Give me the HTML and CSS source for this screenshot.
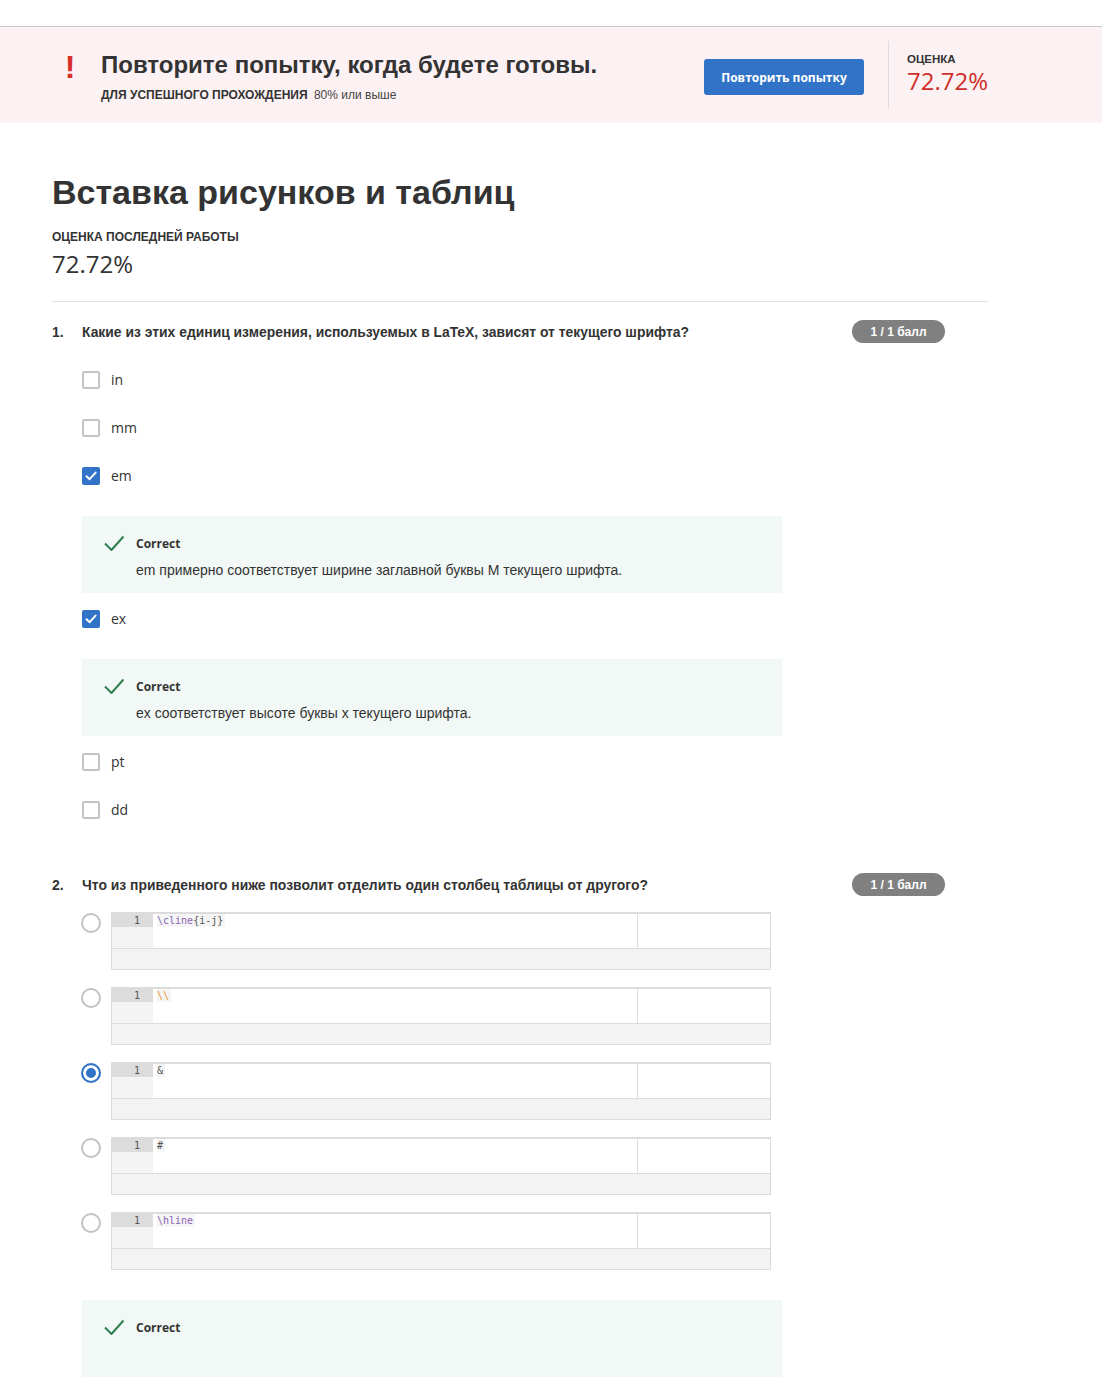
FILE: index.html
```html
<!DOCTYPE html>
<html lang="ru">
<head>
<meta charset="utf-8">
<title>Вставка рисунков и таблиц</title>
<link rel="stylesheet" href="styles.css">
</head>
<body>
<div class="topbar"></div>
<section class="banner">
  <div class="banner-inner">
    <div class="banner-msg">
      <div class="banner-icon">!</div>
      <div class="banner-text">
        <h2 class="banner-title">Повторите попытку, когда будете готовы.</h2>
        <div class="banner-sub"><strong>ДЛЯ УСПЕШНОГО ПРОХОЖДЕНИЯ</strong> 80% или выше</div>
      </div>
    </div>
    <button class="btn-retry" type="button">Повторить попытку</button>
    <div class="banner-divider"></div>
    <div class="banner-score">
      <div class="banner-score-label">ОЦЕНКА</div>
      <div class="banner-score-value">72.72%</div>
    </div>
  </div>
</section>

<main class="main">
  <h1 class="page-title">Вставка рисунков и таблиц</h1>
  <div class="grade-label">ОЦЕНКА ПОСЛЕДНЕЙ РАБОТЫ</div>
  <div class="grade-value">72.72%</div>
  <div class="divider"></div>

  <section class="question q1">
    <div class="q-head">
      <div class="q-num">1.</div>
      <div class="q-text">Какие из этих единиц измерения, используемых в LaTeX, зависят от текущего шрифта?</div>
      <div class="badge">1 / 1 балл</div>
    </div>
    <div class="options">
      <div class="option"><span class="checkbox"></span><span class="opt-label">in</span></div>
      <div class="option"><span class="checkbox"></span><span class="opt-label">mm</span></div>
      <div class="option"><span class="checkbox checked"><svg viewBox="0 0 14 14" width="14" height="14"><polyline points="2.5,7.2 5.6,10.2 11.6,3.6" fill="none" stroke="#fff" stroke-width="2" stroke-linecap="round" stroke-linejoin="round"/></svg></span><span class="opt-label">em</span></div>
      <div class="feedback">
        <svg class="fb-icon" viewBox="0 0 20 16" width="20" height="16"><polyline points="1,8.5 7.5,15 19.5,1.5" fill="none" stroke="#2e7d50" stroke-width="2"/></svg>
        <div class="fb-body">
          <div class="fb-title">Correct</div>
          <div class="fb-text">em примерно соответствует ширине заглавной буквы М текущего шрифта.</div>
        </div>
      </div>
      <div class="option"><span class="checkbox checked"><svg viewBox="0 0 14 14" width="14" height="14"><polyline points="2.5,7.2 5.6,10.2 11.6,3.6" fill="none" stroke="#fff" stroke-width="2" stroke-linecap="round" stroke-linejoin="round"/></svg></span><span class="opt-label">ex</span></div>
      <div class="feedback">
        <svg class="fb-icon" viewBox="0 0 20 16" width="20" height="16"><polyline points="1,8.5 7.5,15 19.5,1.5" fill="none" stroke="#2e7d50" stroke-width="2"/></svg>
        <div class="fb-body">
          <div class="fb-title">Correct</div>
          <div class="fb-text">ex соответствует высоте буквы x текущего шрифта.</div>
        </div>
      </div>
      <div class="option"><span class="checkbox"></span><span class="opt-label">pt</span></div>
      <div class="option"><span class="checkbox"></span><span class="opt-label">dd</span></div>
    </div>
  </section>

  <section class="question q2">
    <div class="q-head">
      <div class="q-num">2.</div>
      <div class="q-text">Что из приведенного ниже позволит отделить один столбец таблицы от другого?</div>
      <div class="badge">1 / 1 балл</div>
    </div>
    <div class="options code-options">
      <div class="code-option">
        <span class="radio"></span>
        <div class="code">
          <div class="code-main">
            <div class="gutter"><div class="ln">1</div></div>
            <div class="code-area"><span class="code-line"><span class="tk-cmd">\cline</span><span class="tk-plain">{i-j}</span></span></div>
            <div class="code-side"></div>
          </div>
          <div class="code-foot"></div>
        </div>
      </div>
      <div class="code-option">
        <span class="radio"></span>
        <div class="code">
          <div class="code-main">
            <div class="gutter"><div class="ln">1</div></div>
            <div class="code-area"><span class="code-line"><span class="tk-esc">\\</span></span></div>
            <div class="code-side"></div>
          </div>
          <div class="code-foot"></div>
        </div>
      </div>
      <div class="code-option">
        <span class="radio selected"></span>
        <div class="code">
          <div class="code-main">
            <div class="gutter"><div class="ln">1</div></div>
            <div class="code-area"><span class="code-line"><span class="tk-plain">&amp;</span></span></div>
            <div class="code-side"></div>
          </div>
          <div class="code-foot"></div>
        </div>
      </div>
      <div class="code-option">
        <span class="radio"></span>
        <div class="code">
          <div class="code-main">
            <div class="gutter"><div class="ln">1</div></div>
            <div class="code-area"><span class="code-line"><span class="tk-plain">#</span></span></div>
            <div class="code-side"></div>
          </div>
          <div class="code-foot"></div>
        </div>
      </div>
      <div class="code-option">
        <span class="radio"></span>
        <div class="code">
          <div class="code-main">
            <div class="gutter"><div class="ln">1</div></div>
            <div class="code-area"><span class="code-line"><span class="tk-cmd">\hline</span></span></div>
            <div class="code-side"></div>
          </div>
          <div class="code-foot"></div>
        </div>
      </div>
      <div class="feedback feedback-last">
        <svg class="fb-icon" viewBox="0 0 20 16" width="20" height="16"><polyline points="1,8.5 7.5,15 19.5,1.5" fill="none" stroke="#2e7d50" stroke-width="2"/></svg>
        <div class="fb-body">
          <div class="fb-title">Correct</div>
          <div class="fb-text"></div>
        </div>
      </div>
    </div>
  </section>
</main>
</body>
</html>
```

FILE: styles.css
```css
* { box-sizing: border-box; }

body {
  margin: 0;
  background: #fff;
  color: #333;
  font-family: "Liberation Sans", Arial, sans-serif;
}

.topbar {
  height: 27px;
  border-bottom: 1px solid #c8c8c8;
}

/* Banner */
.banner {
  background: #fdf2f3;
  height: 96px;
}
.banner-inner {
  display: flex;
  align-items: flex-start;
  height: 100%;
  padding-left: 62px;
}
.banner-msg {
  display: flex;
  align-items: flex-start;
  margin-top: 24px;
}
.banner-icon {
  width: 16px;
  margin-right: 23px;
  margin-top: 2px;
  font-size: 32px;
  line-height: 28px;
  font-weight: 700;
  color: #d9302c;
  text-align: center;
}
.banner-title {
  margin: 0;
  font-size: 24px;
  line-height: 28px;
  font-weight: 700;
  color: #333;
}
.banner-sub {
  margin-top: 8px;
  font-size: 12px;
  line-height: 16px;
  color: #444;
}
.banner-sub strong {
  color: #333;
  margin-right: 3px;
}
.btn-retry {
  margin-left: auto;
  margin-top: 32px;
  width: 160px;
  height: 36px;
  border: 0;
  border-radius: 3px;
  background: #3174c7;
  color: #fff;
  font-family: "Open Sans", sans-serif;
  font-weight: 700;
  font-size: 12px;
  padding: 0;
}
.banner-divider {
  width: 1px;
  height: 67px;
  background: #dcdcdc;
  margin: 14px 18px 0 24px;
}
.banner-score {
  width: 100px;
  margin-top: 25px;
  margin-right: 95px;
}
.banner-score-label {
  font-size: 11.5px;
  line-height: 14px;
  font-weight: 700;
  color: #333;
}
.banner-score-value {
  margin-top: 1px;
  font-family: "Open Sans", sans-serif;
  font-size: 24px;
  line-height: 28px;
  color: #cf2e2a;
}

/* Main */
.main {
  width: 988px;
  padding: 49px 0 0 52px;
}
.page-title {
  margin: 0;
  font-size: 34px;
  line-height: 40px;
  font-weight: 700;
  color: #333;
}
.grade-label {
  margin-top: 17px;
  font-size: 12px;
  line-height: 16px;
  font-weight: 700;
}
.grade-value {
  margin-top: 4px;
  font-family: "Open Sans", sans-serif;
  font-size: 24px;
  line-height: 30px;
  color: #333;
}
.divider {
  margin-top: 22px;
  border-top: 1px solid #e1e1e1;
}

/* Questions */
.question { margin-top: 18px; }
.question.q2 { margin-top: 27px; }

.q-head {
  display: flex;
  align-items: center;
  height: 23px;
}
.q-num {
  width: 30px;
  font-size: 14px;
  font-weight: 700;
}
.q-text {
  flex: 1;
  font-size: 13.9px;
  font-weight: 700;
  color: #333;
}
.badge {
  flex: none;
  width: 93px;
  height: 23px;
  margin-right: 43px;
  border-radius: 12px;
  background: #808080;
  color: #fff;
  font-size: 12px;
  font-weight: 700;
  display: flex;
  align-items: center;
  justify-content: center;
}

.options {
  display: flex;
  flex-direction: column;
  align-items: flex-start;
  padding-left: 30px;
  margin-top: 25px;
}
.option {
  display: flex;
  align-items: center;
  height: 24px;
  margin-bottom: 24px;
}
.checkbox {
  width: 18px;
  height: 18px;
  border: 2px solid #c4c4c4;
  border-radius: 2px;
  margin-right: 11px;
  display: flex;
  align-items: center;
  justify-content: center;
}
.checkbox.checked {
  background: #3174c7;
  border-color: #3174c7;
}
.checkbox svg { display: block; }
.opt-label {
  font-family: "Open Sans", sans-serif;
  font-size: 14px;
  line-height: 22px;
  color: #333;
}

/* Feedback */
.feedback {
  width: 700px;
  display: flex;
  align-items: flex-start;
  background: #f2f8f6;
  margin: 4px 0 14px;
  padding: 20px 20px 14px 22px;
}
.fb-icon {
  display: block;
  flex: none;
  margin-right: 12px;
  margin-top: -1px;
}
.fb-title {
  font-family: "Open Sans", sans-serif;
  font-size: 12px;
  line-height: 16px;
  font-weight: 700;
  color: #333;
}
.fb-text {
  margin-top: 9px;
  min-height: 18px;
  font-size: 14px;
  line-height: 18px;
  color: #333;
}
.feedback-last { margin: 13px 0 0; }

/* Code options */
.code-options { margin-top: 16px; }
.code-option {
  display: flex;
  align-items: flex-start;
  margin-bottom: 17px;
}
.radio {
  flex: none;
  width: 20px;
  height: 20px;
  margin: 1px 10px 0 -1px;
  border: 2px solid #c2c2c2;
  border-radius: 50%;
  background: #fff;
}
.radio.selected {
  border-color: #3174c7;
  background: #3174c7;
  box-shadow: inset 0 0 0 3px #fff;
}
.code {
  width: 660px;
  border: 1px solid #dcdcdc;
  border-top: 2px solid #dcdcdc;
}
.code-main {
  display: flex;
  height: 34px;
}
.gutter {
  flex: none;
  width: 41px;
  background: #f4f4f4;
}
.ln {
  height: 13px;
  background: #dcdcdc;
  text-align: right;
  padding-right: 13px;
  font-family: "DejaVu Sans Mono", monospace;
  font-size: 10px;
  line-height: 13px;
  color: #555;
}
.code-area {
  flex: 1;
  background: #fff;
  padding-left: 4px;
  border-right: 1px solid #d8dfe8;
  font-family: "DejaVu Sans Mono", monospace;
  font-size: 10px;
  line-height: 13px;
}
.code-line {
  display: inline-block;
  vertical-align: top;
  background: #f5f5f5;
  padding-right: 2px;
  font-family: "DejaVu Sans Mono", monospace;
  font-size: 10px;
  line-height: 13px;
}
.tk-cmd { color: #8a63b5; }
.tk-plain { color: #555; }
.tk-esc { color: #ef922f; }
.code-side {
  flex: none;
  width: 132px;
  background: #fff;
}
.code-foot {
  height: 21px;
  background: #f3f3f3;
  border-top: 1px solid #dcdcdc;
}
```
